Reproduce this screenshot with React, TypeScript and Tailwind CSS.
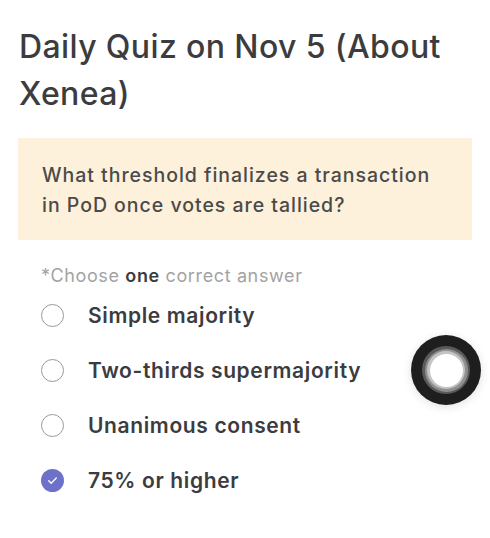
import React from "react";

const options = [
  { label: "Simple majority", checked: false },
  { label: "Two-thirds supermajority", checked: false },
  { label: "Unanimous consent", checked: false },
  { label: "75% or higher", checked: true },
];

export default function App() {
  return (
    <div
      className="relative w-[490px] h-[538px] bg-white overflow-hidden"
      style={{ fontFamily: "Inter, 'Noto Sans', sans-serif" }}
    >
      <div className="px-[18px] pt-[23px]">
        <h1 className="pl-[1px] text-[32px] leading-[47px] font-medium text-[#3c3c3f] tracking-[0.012em]">
          Daily Quiz on Nov 5 (About Xenea)
        </h1>
        <div className="mt-[21px] bg-[#fdf1dc] pl-[24px] pr-[20px] pt-[22px] pb-[20px]">
          <p className="text-[19.5px] leading-[30px] font-medium text-[#4a4a4a] tracking-[0.05em]">
            What threshold finalizes a transaction in PoD once votes are tallied?
          </p>
        </div>
        <div className="pl-[23px] mt-[24px]">
          <p className="text-[18px] leading-[24px] text-[#a3a3a3] tracking-[0.035em]">
            *Choose <span className="font-semibold text-[#3c3c3f]">one</span> correct answer
          </p>
          <div className="flex flex-col">
            {options.map((o) => (
              <div key={o.label} className="flex items-center h-[55px]">
                {o.checked ? (
                  <div className="w-[23px] h-[23px] rounded-full bg-[#6e71c9] flex items-center justify-center">
                    <svg width="13" height="13" viewBox="0 0 24 24" fill="none" stroke="white" strokeWidth="2.5" strokeLinecap="round" strokeLinejoin="round">
                      <path d="M5 12.5l4.5 4.5L19 7.5" />
                    </svg>
                  </div>
                ) : (
                  <div className="w-[23px] h-[23px] rounded-full border-[1.5px] border-[#9a9a9a]" />
                )}
                <span className="ml-[24px] text-[21px] font-semibold text-[#3c3c3f] tracking-[0.03em]">{o.label}</span>
              </div>
            ))}
          </div>
        </div>
      </div>
      <div className="absolute left-[411px] top-[335px] w-[70px] h-[70px] rounded-full bg-[#1e1e1e] flex items-center justify-center shadow-[0_2px_10px_rgba(0,0,0,0.12)]">
        <div className="w-[48px] h-[48px] rounded-full bg-[#5a5a5a] flex items-center justify-center">
          <div className="w-[43px] h-[43px] rounded-full bg-[#8f8f8f] flex items-center justify-center">
            <div className="w-[38px] h-[38px] rounded-full bg-[#c4c4c4] flex items-center justify-center">
              <div className="w-[33px] h-[33px] rounded-full bg-white" />
            </div>
          </div>
        </div>
      </div>
    </div>
  );
}
